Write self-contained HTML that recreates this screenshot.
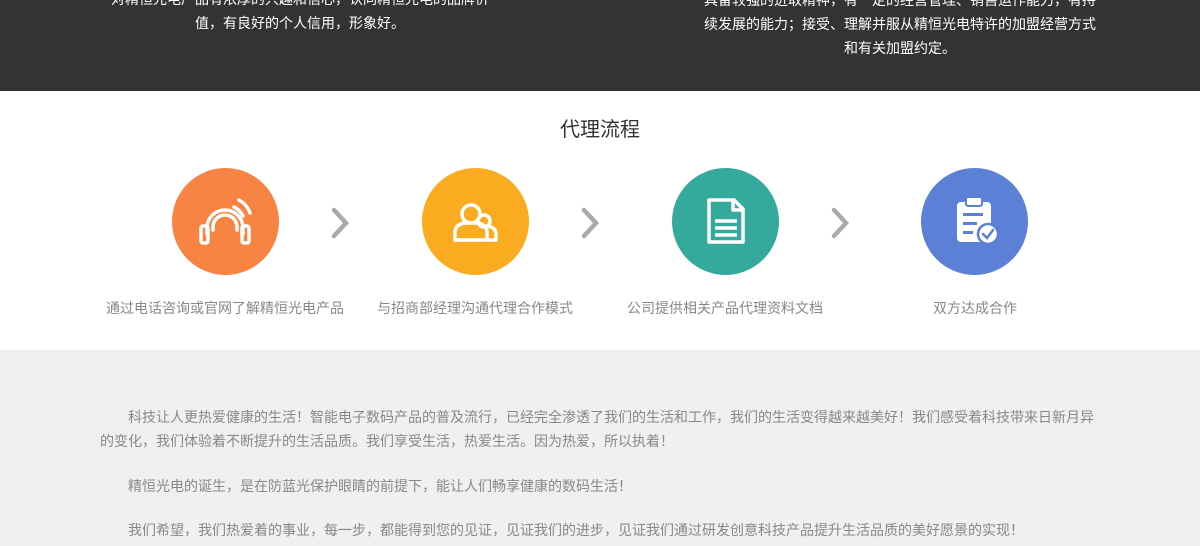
<!DOCTYPE html>
<html><head><meta charset="utf-8">
<style>
*{margin:0;padding:0;box-sizing:border-box}
body{width:1200px;height:546px;overflow:hidden;background:#fff;font-family:"Liberation Sans","Noto Sans CJK SC",sans-serif}
.top{position:absolute;left:0;top:0;width:1200px;height:91px;background:#333;color:#fff;font-size:14px;line-height:24px}
.col{position:absolute;text-align:center}
.title{position:absolute;top:116px;left:0;width:1200px;text-align:center;font-size:20px;color:#333;line-height:28px}
.c{position:absolute;width:107px;height:107px;border-radius:50%;top:168px}
.c svg{position:absolute;left:0;top:0}
.lbl{position:absolute;top:298px;width:300px;text-align:center;font-size:14px;color:#888;line-height:20px}
.arr{position:absolute;top:206px}
.gray{position:absolute;top:350px;left:0;width:1200px;height:196px;background:#f0f0f0}
.gray p{position:absolute;left:100px;width:1000px;font-size:14px;color:#888;line-height:24px;text-indent:28px}
</style></head><body>
<div class="top">
 <div class="col" style="left:100px;width:400px;top:-13px">对精恒光电产品有浓厚的兴趣和信心，认同精恒光电的品牌价<br>值，有良好的个人信用，形象好。</div>
 <div class="col" style="left:700px;width:400px;top:-12px">具备较强的进取精神，有一定的经营管理、销售运作能力，有持<br>续发展的能力；接受、理解并服从精恒光电特许的加盟经营方式<br>和有关加盟约定。</div>
</div>
<div class="title">代理流程</div>

<div class="c" style="left:172px;background:#f78443">
<svg width="107" height="107" viewBox="0 0 107 107" fill="none" stroke="#fff" stroke-width="3.5" stroke-linecap="round">
<path d="M35 66 V60 A18 18 0 0 1 71 60 V66"/>
<path d="M41 62 V59 A12 12 0 0 1 65 59 V62"/>
<rect x="29" y="58" width="7" height="17" rx="2"/>
<rect x="70" y="58" width="7" height="17" rx="2"/>
<path d="M62 39 A20 20 0 0 1 71 48"/>
<path d="M67 32 A24 24 0 0 1 78 45"/>
</svg></div>
<svg class="arr" style="left:330px" width="20" height="34" viewBox="0 0 20 34"><path d="M4 4 L16 17 L4 30" fill="none" stroke="#aaa" stroke-width="4.5" stroke-linecap="round"/></svg>

<div class="c" style="left:422px;background:#fbab1f">
<svg width="107" height="107" viewBox="0 0 107 107" fill="none" stroke="#fff" stroke-width="3.5" stroke-linejoin="round">
<circle cx="49" cy="46" r="9"/>
<path d="M33 72 V64 Q33 57 42 55 H56 Q65 57 65 64 V72 Z"/>
<circle cx="62" cy="53" r="6"/>
<path d="M66 58 Q74 60 74 66 V72 H66"/>
</svg></div>
<svg class="arr" style="left:580px" width="20" height="34" viewBox="0 0 20 34"><path d="M4 4 L16 17 L4 30" fill="none" stroke="#aaa" stroke-width="4.5" stroke-linecap="round"/></svg>

<div class="c" style="left:672px;background:#36a99d">
<svg width="107" height="107" viewBox="0 0 107 107" fill="none" stroke="#fff" stroke-width="3.5" stroke-linejoin="round">
<path d="M37 32 H62 L71 41 V74 H37 Z"/>
<path d="M61 32 V42 H71"/>
<path d="M43 53 H65 M43 60 H65 M43 67 H65"/>
</svg></div>
<svg class="arr" style="left:830px" width="20" height="34" viewBox="0 0 20 34"><path d="M4 4 L16 17 L4 30" fill="none" stroke="#aaa" stroke-width="4.5" stroke-linecap="round"/></svg>

<div class="c" style="left:921px;background:#5b80d6">
<svg width="107" height="107" viewBox="0 0 107 107">
<rect x="36" y="34" width="34" height="40" rx="4" fill="#fff"/>
<rect x="45" y="29" width="16" height="9" rx="2" fill="#fff" stroke="#5b80d6" stroke-width="2"/>
<rect x="42" y="45" width="20" height="3" fill="#5b80d6"/>
<rect x="42" y="54" width="14" height="3" fill="#5b80d6"/>
<rect x="42" y="63" width="10" height="3" fill="#5b80d6"/>
<circle cx="67" cy="66" r="10" fill="#fff" stroke="#5b80d6" stroke-width="2.5"/>
<path d="M62 66 L66 70 L72 62" fill="none" stroke="#5b80d6" stroke-width="2.5" stroke-linecap="round"/>
</svg></div>

<div class="lbl" style="left:75px">通过电话咨询或官网了解精恒光电产品</div>
<div class="lbl" style="left:325px">与招商部经理沟通代理合作模式</div>
<div class="lbl" style="left:575px">公司提供相关产品代理资料文档</div>
<div class="lbl" style="left:825px">双方达成合作</div>

<div class="gray">
<p style="top:55px">科技让人更热爱健康的生活！智能电子数码产品的普及流行，已经完全渗透了我们的生活和工作，我们的生活变得越来越美好！我们感受着科技带来日新月异的变化，我们体验着不断提升的生活品质。我们享受生活，热爱生活。因为热爱，所以执着！</p>
<p style="top:124px">精恒光电的诞生，是在防蓝光保护眼睛的前提下，能让人们畅享健康的数码生活！</p>
<p style="top:168px">我们希望，我们热爱着的事业，每一步，都能得到您的见证，见证我们的进步，见证我们通过研发创意科技产品提升生活品质的美好愿景的实现！</p>
</div>
</body></html>
